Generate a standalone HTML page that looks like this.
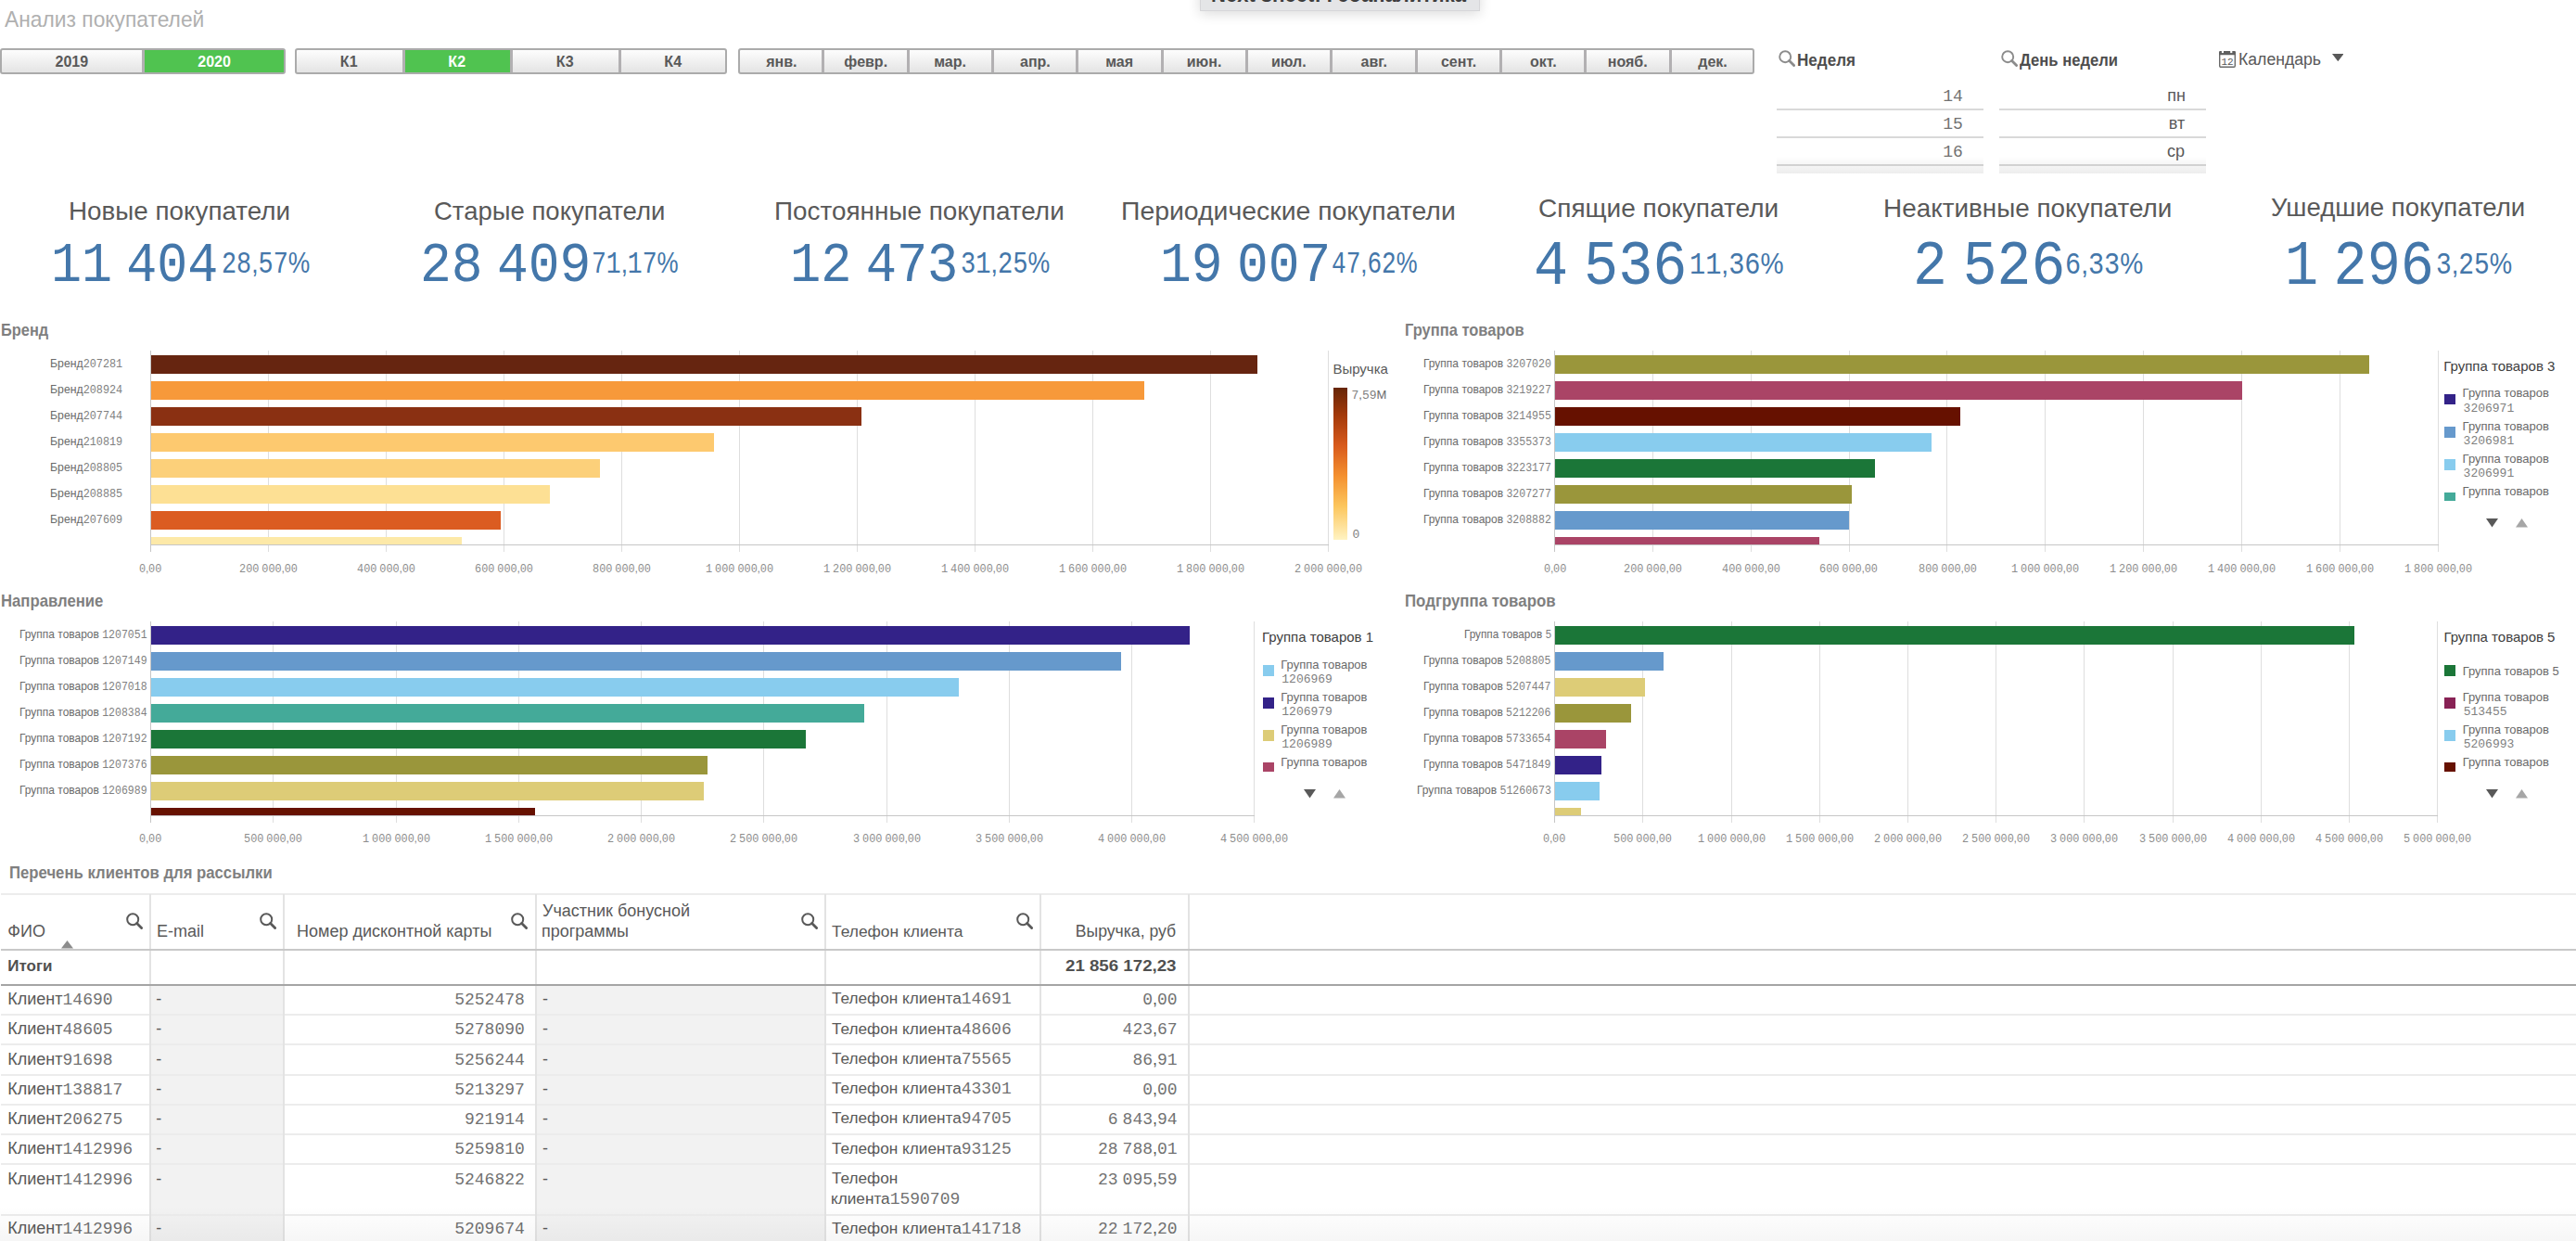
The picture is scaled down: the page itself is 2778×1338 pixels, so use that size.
<!DOCTYPE html>
<html><head><meta charset="utf-8"><title>Анализ покупателей</title>
<style>
html,body{margin:0;padding:0;background:#fff;}
body{width:2778px;height:1338px;position:relative;overflow:hidden;font-family:'Liberation Sans', sans-serif;}
.t{position:absolute;white-space:nowrap;line-height:1;transform-origin:0 0;}
.m{font-family:'Liberation Mono', monospace;}
</style></head><body>
<div style="position:absolute;left:0px;top:52px;width:307.5px;height:28px;box-sizing:border-box;border:2px solid #ababab;border-radius:3px;background:linear-gradient(#fdfdfd,#e4e4e4);overflow:hidden"></div>
<div style="position:absolute;left:155.75px;top:54.00px;width:149.75px;height:24.00px;background:#50c350;"></div>
<div style="position:absolute;left:152.75px;top:54.00px;width:3.00px;height:24.00px;background:#b2b0b2;"></div>
<div style="position:absolute;left:318px;top:52px;width:466px;height:28px;box-sizing:border-box;border:2px solid #ababab;border-radius:3px;background:linear-gradient(#fdfdfd,#e4e4e4);overflow:hidden"></div>
<div style="position:absolute;left:436.50px;top:54.00px;width:114.50px;height:24.00px;background:#50c350;"></div>
<div style="position:absolute;left:433.50px;top:54.00px;width:3.00px;height:24.00px;background:#b2b0b2;"></div>
<div style="position:absolute;left:550.00px;top:54.00px;width:3.00px;height:24.00px;background:#b2b0b2;"></div>
<div style="position:absolute;left:666.50px;top:54.00px;width:3.00px;height:24.00px;background:#b2b0b2;"></div>
<div style="position:absolute;left:796px;top:52px;width:1096px;height:28px;box-sizing:border-box;border:2px solid #ababab;border-radius:3px;background:linear-gradient(#fdfdfd,#e4e4e4);overflow:hidden"></div>
<div style="position:absolute;left:886.33px;top:54.00px;width:3.00px;height:24.00px;background:#b2b0b2;"></div>
<div style="position:absolute;left:977.67px;top:54.00px;width:3.00px;height:24.00px;background:#b2b0b2;"></div>
<div style="position:absolute;left:1069.00px;top:54.00px;width:3.00px;height:24.00px;background:#b2b0b2;"></div>
<div style="position:absolute;left:1160.33px;top:54.00px;width:3.00px;height:24.00px;background:#b2b0b2;"></div>
<div style="position:absolute;left:1251.67px;top:54.00px;width:3.00px;height:24.00px;background:#b2b0b2;"></div>
<div style="position:absolute;left:1343.00px;top:54.00px;width:3.00px;height:24.00px;background:#b2b0b2;"></div>
<div style="position:absolute;left:1434.33px;top:54.00px;width:3.00px;height:24.00px;background:#b2b0b2;"></div>
<div style="position:absolute;left:1525.67px;top:54.00px;width:3.00px;height:24.00px;background:#b2b0b2;"></div>
<div style="position:absolute;left:1617.00px;top:54.00px;width:3.00px;height:24.00px;background:#b2b0b2;"></div>
<div style="position:absolute;left:1708.33px;top:54.00px;width:3.00px;height:24.00px;background:#b2b0b2;"></div>
<div style="position:absolute;left:1799.67px;top:54.00px;width:3.00px;height:24.00px;background:#b2b0b2;"></div>
<svg style="position:absolute;left:1918px;top:54px" width="18" height="18" viewBox="0 0 18 18"><circle cx="7.2" cy="7.2" r="6" fill="none" stroke="#8c8c8c" stroke-width="1.9"/><line x1="11.6" y1="11.6" x2="16.6" y2="16.6" stroke="#8c8c8c" stroke-width="2.8" stroke-linecap="round"/></svg>
<svg style="position:absolute;left:2157.6px;top:54px" width="18" height="18" viewBox="0 0 18 18"><circle cx="7.2" cy="7.2" r="6" fill="none" stroke="#8c8c8c" stroke-width="1.9"/><line x1="11.6" y1="11.6" x2="16.6" y2="16.6" stroke="#8c8c8c" stroke-width="2.8" stroke-linecap="round"/></svg>
<div style="position:absolute;left:1916.00px;top:116.60px;width:223.00px;height:2.00px;background:#d9d9d9;"></div>
<div style="position:absolute;left:1916.00px;top:146.60px;width:223.00px;height:2.00px;background:#d9d9d9;"></div>
<div style="position:absolute;left:1916.00px;top:176.60px;width:223.00px;height:2.00px;background:#d9d9d9;"></div>
<div style="position:absolute;left:2156.00px;top:116.60px;width:223.00px;height:2.00px;background:#d9d9d9;"></div>
<div style="position:absolute;left:2156.00px;top:146.60px;width:223.00px;height:2.00px;background:#d9d9d9;"></div>
<div style="position:absolute;left:2156.00px;top:176.60px;width:223.00px;height:2.00px;background:#d9d9d9;"></div>
<svg style="position:absolute;left:2393px;top:55px" width="18" height="18" viewBox="0 0 18 18"><rect x="0.7" y="1.5" width="16.6" height="15.8" rx="1.2" fill="none" stroke="#6a6a6a" stroke-width="1.4"/><path d="M0 1.2 Q0 0 1.2 0 H16.8 Q18 0 18 1.2 V4.3 H0 Z" fill="#606060"/><rect x="2.9" y="0" width="2.1" height="2.1" fill="#fff"/><rect x="12.2" y="0" width="2.1" height="2.1" fill="#fff"/><text x="9" y="15.3" font-size="11" font-family="Liberation Mono" text-anchor="middle" fill="#555">12</text></svg>
<svg style="position:absolute;left:2514.6px;top:57.9px" width="12.6" height="8.2" viewBox="0 0 12.6 8.2"><polygon points="0,0 12.6,0 6.3,8.2" fill="#595959"/></svg>
<div style="position:absolute;left:1294px;top:-30px;width:302px;height:42px;background:#e4e5e7;box-sizing:border-box;border:1px solid #d6d6d9;box-shadow:0 3px 14px rgba(0,0,0,0.14);"></div>
<div style="position:absolute;left:162.00px;top:378.40px;width:1.00px;height:216.60px;background:#c6c6c6;"></div>
<div style="position:absolute;left:289.00px;top:378.40px;width:1.00px;height:216.60px;background:#dedede;"></div>
<div style="position:absolute;left:416.00px;top:378.40px;width:1.00px;height:216.60px;background:#dedede;"></div>
<div style="position:absolute;left:543.00px;top:378.40px;width:1.00px;height:216.60px;background:#dedede;"></div>
<div style="position:absolute;left:670.00px;top:378.40px;width:1.00px;height:216.60px;background:#dedede;"></div>
<div style="position:absolute;left:797.00px;top:378.40px;width:1.00px;height:216.60px;background:#dedede;"></div>
<div style="position:absolute;left:924.00px;top:378.40px;width:1.00px;height:216.60px;background:#dedede;"></div>
<div style="position:absolute;left:1051.00px;top:378.40px;width:1.00px;height:216.60px;background:#dedede;"></div>
<div style="position:absolute;left:1178.00px;top:378.40px;width:1.00px;height:216.60px;background:#dedede;"></div>
<div style="position:absolute;left:1305.00px;top:378.40px;width:1.00px;height:216.60px;background:#dedede;"></div>
<div style="position:absolute;left:1432.00px;top:378.40px;width:1.00px;height:216.60px;background:#dedede;"></div>
<div style="position:absolute;left:162.50px;top:587.20px;width:1270.50px;height:1.00px;background:#c6c6c6;"></div>
<div style="position:absolute;left:163.00px;top:383.00px;width:1193.00px;height:19.50px;background:#662510;"></div>
<div style="position:absolute;left:163.00px;top:411.00px;width:1071.00px;height:19.50px;background:#f7993a;"></div>
<div style="position:absolute;left:163.00px;top:439.00px;width:766.40px;height:19.50px;background:#8a3012;"></div>
<div style="position:absolute;left:163.00px;top:467.00px;width:606.60px;height:19.50px;background:#fdc96f;"></div>
<div style="position:absolute;left:163.00px;top:495.00px;width:483.90px;height:19.50px;background:#fcd07a;"></div>
<div style="position:absolute;left:163.00px;top:523.00px;width:429.70px;height:19.50px;background:#fde094;"></div>
<div style="position:absolute;left:163.00px;top:551.00px;width:377.20px;height:19.50px;background:#db5c21;"></div>
<div style="position:absolute;left:163.00px;top:579.00px;width:335.20px;height:8.00px;background:#fde9a8;"></div>
<div style="position:absolute;left:1438.00px;top:418.00px;width:15.00px;height:164.00px;background:linear-gradient(#662506 0%, #a3390a 18%, #d85a1c 38%, #f4902f 58%, #fcc65d 78%, #fff3c2 100%);"></div>
<div style="position:absolute;left:1676.20px;top:378.40px;width:1.00px;height:216.60px;background:#c6c6c6;"></div>
<div style="position:absolute;left:1782.02px;top:378.40px;width:1.00px;height:216.60px;background:#dedede;"></div>
<div style="position:absolute;left:1887.84px;top:378.40px;width:1.00px;height:216.60px;background:#dedede;"></div>
<div style="position:absolute;left:1993.66px;top:378.40px;width:1.00px;height:216.60px;background:#dedede;"></div>
<div style="position:absolute;left:2099.48px;top:378.40px;width:1.00px;height:216.60px;background:#dedede;"></div>
<div style="position:absolute;left:2205.30px;top:378.40px;width:1.00px;height:216.60px;background:#dedede;"></div>
<div style="position:absolute;left:2311.12px;top:378.40px;width:1.00px;height:216.60px;background:#dedede;"></div>
<div style="position:absolute;left:2416.94px;top:378.40px;width:1.00px;height:216.60px;background:#dedede;"></div>
<div style="position:absolute;left:2522.76px;top:378.40px;width:1.00px;height:216.60px;background:#dedede;"></div>
<div style="position:absolute;left:2628.58px;top:378.40px;width:1.00px;height:216.60px;background:#dedede;"></div>
<div style="position:absolute;left:1676.70px;top:587.20px;width:952.88px;height:1.00px;background:#c6c6c6;"></div>
<div style="position:absolute;left:1677.20px;top:383.00px;width:878.10px;height:19.50px;background:#9a963b;"></div>
<div style="position:absolute;left:1677.20px;top:411.00px;width:740.70px;height:19.50px;background:#aa4466;"></div>
<div style="position:absolute;left:1677.20px;top:439.00px;width:437.00px;height:19.50px;background:#661100;"></div>
<div style="position:absolute;left:1677.20px;top:467.00px;width:405.80px;height:19.50px;background:#88ccee;"></div>
<div style="position:absolute;left:1677.20px;top:495.00px;width:344.80px;height:19.50px;background:#1b7638;"></div>
<div style="position:absolute;left:1677.20px;top:523.00px;width:319.80px;height:19.50px;background:#9a963b;"></div>
<div style="position:absolute;left:1677.20px;top:551.00px;width:316.80px;height:19.50px;background:#6699cc;"></div>
<div style="position:absolute;left:1677.20px;top:579.00px;width:284.80px;height:8.00px;background:#aa4466;"></div>
<div style="position:absolute;left:162.10px;top:670.20px;width:1.00px;height:216.80px;background:#c6c6c6;"></div>
<div style="position:absolute;left:294.35px;top:670.20px;width:1.00px;height:216.80px;background:#dedede;"></div>
<div style="position:absolute;left:426.60px;top:670.20px;width:1.00px;height:216.80px;background:#dedede;"></div>
<div style="position:absolute;left:558.85px;top:670.20px;width:1.00px;height:216.80px;background:#dedede;"></div>
<div style="position:absolute;left:691.10px;top:670.20px;width:1.00px;height:216.80px;background:#dedede;"></div>
<div style="position:absolute;left:823.35px;top:670.20px;width:1.00px;height:216.80px;background:#dedede;"></div>
<div style="position:absolute;left:955.60px;top:670.20px;width:1.00px;height:216.80px;background:#dedede;"></div>
<div style="position:absolute;left:1087.85px;top:670.20px;width:1.00px;height:216.80px;background:#dedede;"></div>
<div style="position:absolute;left:1220.10px;top:670.20px;width:1.00px;height:216.80px;background:#dedede;"></div>
<div style="position:absolute;left:1352.35px;top:670.20px;width:1.00px;height:216.80px;background:#dedede;"></div>
<div style="position:absolute;left:162.60px;top:879.00px;width:1190.75px;height:1.00px;background:#c6c6c6;"></div>
<div style="position:absolute;left:163.10px;top:675.00px;width:1120.30px;height:19.50px;background:#332288;"></div>
<div style="position:absolute;left:163.10px;top:703.00px;width:1046.00px;height:19.50px;background:#6699cc;"></div>
<div style="position:absolute;left:163.10px;top:731.00px;width:870.80px;height:19.50px;background:#88ccee;"></div>
<div style="position:absolute;left:163.10px;top:759.00px;width:769.40px;height:19.50px;background:#44aa99;"></div>
<div style="position:absolute;left:163.10px;top:787.00px;width:706.10px;height:19.50px;background:#1b7638;"></div>
<div style="position:absolute;left:163.10px;top:815.00px;width:599.90px;height:19.50px;background:#9a963b;"></div>
<div style="position:absolute;left:163.10px;top:843.00px;width:595.50px;height:19.50px;background:#ddcc77;"></div>
<div style="position:absolute;left:163.10px;top:871.00px;width:413.50px;height:8.00px;background:#661100;"></div>
<div style="position:absolute;left:1676.10px;top:670.20px;width:1.00px;height:216.80px;background:#c6c6c6;"></div>
<div style="position:absolute;left:1771.30px;top:670.20px;width:1.00px;height:216.80px;background:#dedede;"></div>
<div style="position:absolute;left:1866.50px;top:670.20px;width:1.00px;height:216.80px;background:#dedede;"></div>
<div style="position:absolute;left:1961.70px;top:670.20px;width:1.00px;height:216.80px;background:#dedede;"></div>
<div style="position:absolute;left:2056.90px;top:670.20px;width:1.00px;height:216.80px;background:#dedede;"></div>
<div style="position:absolute;left:2152.10px;top:670.20px;width:1.00px;height:216.80px;background:#dedede;"></div>
<div style="position:absolute;left:2247.30px;top:670.20px;width:1.00px;height:216.80px;background:#dedede;"></div>
<div style="position:absolute;left:2342.50px;top:670.20px;width:1.00px;height:216.80px;background:#dedede;"></div>
<div style="position:absolute;left:2437.70px;top:670.20px;width:1.00px;height:216.80px;background:#dedede;"></div>
<div style="position:absolute;left:2532.90px;top:670.20px;width:1.00px;height:216.80px;background:#dedede;"></div>
<div style="position:absolute;left:2628.10px;top:670.20px;width:1.00px;height:216.80px;background:#dedede;"></div>
<div style="position:absolute;left:1676.60px;top:879.00px;width:952.50px;height:1.00px;background:#c6c6c6;"></div>
<div style="position:absolute;left:1677.10px;top:675.00px;width:861.90px;height:19.50px;background:#1b7638;"></div>
<div style="position:absolute;left:1677.10px;top:703.00px;width:116.90px;height:19.50px;background:#6699cc;"></div>
<div style="position:absolute;left:1677.10px;top:731.00px;width:97.40px;height:19.50px;background:#ddcc77;"></div>
<div style="position:absolute;left:1677.10px;top:759.00px;width:81.50px;height:19.50px;background:#9a963b;"></div>
<div style="position:absolute;left:1677.10px;top:787.00px;width:54.90px;height:19.50px;background:#aa4466;"></div>
<div style="position:absolute;left:1677.10px;top:815.00px;width:49.50px;height:19.50px;background:#332288;"></div>
<div style="position:absolute;left:1677.10px;top:843.00px;width:47.90px;height:19.50px;background:#88ccee;"></div>
<div style="position:absolute;left:1677.10px;top:871.00px;width:27.90px;height:8.00px;background:#ddcc77;"></div>
<div style="position:absolute;left:2636.30px;top:424.60px;width:11.50px;height:11.50px;background:#332288;"></div>
<div style="position:absolute;left:2636.30px;top:460.00px;width:11.50px;height:11.50px;background:#6699cc;"></div>
<div style="position:absolute;left:2636.30px;top:495.30px;width:11.50px;height:11.50px;background:#88ccee;"></div>
<div style="position:absolute;left:2636.30px;top:530.50px;width:11.50px;height:9.50px;background:#44aa99;"></div>
<svg style="position:absolute;left:2680.5px;top:559px" width="13" height="9.5" viewBox="0 0 13 9.5"><polygon points="0,0 13,0 6.5,9.5" fill="#595959"/></svg>
<svg style="position:absolute;left:2712.6000000000004px;top:559px" width="13" height="9.5" viewBox="0 0 13 9.5"><polygon points="0,9.5 13,9.5 6.5,0" fill="#a6a6a6"/></svg>
<div style="position:absolute;left:1362.00px;top:717.00px;width:11.50px;height:11.50px;background:#88ccee;"></div>
<div style="position:absolute;left:1362.00px;top:752.00px;width:11.50px;height:11.50px;background:#332288;"></div>
<div style="position:absolute;left:1362.00px;top:787.00px;width:11.50px;height:11.50px;background:#ddcc77;"></div>
<div style="position:absolute;left:1362.00px;top:822.00px;width:11.50px;height:9.50px;background:#aa4466;"></div>
<svg style="position:absolute;left:1406.2px;top:851px" width="13" height="9.5" viewBox="0 0 13 9.5"><polygon points="0,0 13,0 6.5,9.5" fill="#595959"/></svg>
<svg style="position:absolute;left:1438.3px;top:851px" width="13" height="9.5" viewBox="0 0 13 9.5"><polygon points="0,9.5 13,9.5 6.5,0" fill="#a6a6a6"/></svg>
<div style="position:absolute;left:2636.40px;top:717.00px;width:11.50px;height:11.50px;background:#1b7638;"></div>
<div style="position:absolute;left:2636.40px;top:752.00px;width:11.50px;height:11.50px;background:#882255;"></div>
<div style="position:absolute;left:2636.40px;top:787.00px;width:11.50px;height:11.50px;background:#88ccee;"></div>
<div style="position:absolute;left:2636.40px;top:822.00px;width:11.50px;height:9.50px;background:#661100;"></div>
<svg style="position:absolute;left:2680.6px;top:851px" width="13" height="9.5" viewBox="0 0 13 9.5"><polygon points="0,0 13,0 6.5,9.5" fill="#595959"/></svg>
<svg style="position:absolute;left:2712.7000000000003px;top:851px" width="13" height="9.5" viewBox="0 0 13 9.5"><polygon points="0,9.5 13,9.5 6.5,0" fill="#a6a6a6"/></svg>
<div style="position:absolute;left:163.00px;top:1062.50px;width:142.00px;height:275.50px;background:#f2f2f2;"></div>
<div style="position:absolute;left:578.70px;top:1062.50px;width:310.30px;height:275.50px;background:#f2f2f2;"></div>
<div style="position:absolute;left:1.00px;top:963.20px;width:2777.00px;height:2.00px;background:#ececec;"></div>
<div style="position:absolute;left:1.00px;top:1092.80px;width:2777.00px;height:2.00px;background:#ececec;"></div>
<div style="position:absolute;left:1.00px;top:1125.40px;width:2777.00px;height:2.00px;background:#ececec;"></div>
<div style="position:absolute;left:1.00px;top:1158.00px;width:2777.00px;height:2.00px;background:#ececec;"></div>
<div style="position:absolute;left:1.00px;top:1190.00px;width:2777.00px;height:2.00px;background:#ececec;"></div>
<div style="position:absolute;left:1.00px;top:1222.00px;width:2777.00px;height:2.00px;background:#ececec;"></div>
<div style="position:absolute;left:1.00px;top:1254.20px;width:2777.00px;height:2.00px;background:#ececec;"></div>
<div style="position:absolute;left:1.00px;top:1309.00px;width:2777.00px;height:2.00px;background:#ececec;"></div>
<div style="position:absolute;left:161.00px;top:964.20px;width:2.00px;height:373.80px;background:#e3e3e3;"></div>
<div style="position:absolute;left:304.80px;top:964.20px;width:2.00px;height:373.80px;background:#e3e3e3;"></div>
<div style="position:absolute;left:576.70px;top:964.20px;width:2.00px;height:373.80px;background:#e3e3e3;"></div>
<div style="position:absolute;left:888.80px;top:964.20px;width:2.00px;height:373.80px;background:#e3e3e3;"></div>
<div style="position:absolute;left:1120.60px;top:964.20px;width:2.00px;height:373.80px;background:#e3e3e3;"></div>
<div style="position:absolute;left:1280.60px;top:964.20px;width:2.00px;height:373.80px;background:#e3e3e3;"></div>
<div style="position:absolute;left:1.00px;top:1023.00px;width:2777.00px;height:2.00px;background:#c8c8c8;"></div>
<div style="position:absolute;left:1.00px;top:1061.00px;width:2777.00px;height:2.00px;background:#a5a5a5;"></div>
<svg style="position:absolute;left:135.8px;top:984px" width="18" height="18" viewBox="0 0 18 18"><circle cx="7.2" cy="7.2" r="6" fill="none" stroke="#595959" stroke-width="2.0"/><line x1="11.6" y1="11.6" x2="16.6" y2="16.6" stroke="#595959" stroke-width="2.8" stroke-linecap="round"/></svg>
<svg style="position:absolute;left:279.5px;top:984px" width="18" height="18" viewBox="0 0 18 18"><circle cx="7.2" cy="7.2" r="6" fill="none" stroke="#595959" stroke-width="2.0"/><line x1="11.6" y1="11.6" x2="16.6" y2="16.6" stroke="#595959" stroke-width="2.8" stroke-linecap="round"/></svg>
<svg style="position:absolute;left:550.5px;top:984px" width="18" height="18" viewBox="0 0 18 18"><circle cx="7.2" cy="7.2" r="6" fill="none" stroke="#595959" stroke-width="2.0"/><line x1="11.6" y1="11.6" x2="16.6" y2="16.6" stroke="#595959" stroke-width="2.8" stroke-linecap="round"/></svg>
<svg style="position:absolute;left:863.6px;top:984px" width="18" height="18" viewBox="0 0 18 18"><circle cx="7.2" cy="7.2" r="6" fill="none" stroke="#595959" stroke-width="2.0"/><line x1="11.6" y1="11.6" x2="16.6" y2="16.6" stroke="#595959" stroke-width="2.8" stroke-linecap="round"/></svg>
<svg style="position:absolute;left:1095.8px;top:984px" width="18" height="18" viewBox="0 0 18 18"><circle cx="7.2" cy="7.2" r="6" fill="none" stroke="#595959" stroke-width="2.0"/><line x1="11.6" y1="11.6" x2="16.6" y2="16.6" stroke="#595959" stroke-width="2.8" stroke-linecap="round"/></svg>
<svg style="position:absolute;left:66.4px;top:1014.3px" width="13" height="8.5" viewBox="0 0 13 8.5"><polygon points="0,8.5 13,8.5 6.5,0" fill="#8c8c8c"/></svg>
<div class="t" style="left:5.40px;top:8.80px;font-size:24px;color:#b0b0b0;transform:scaleX(0.9501);">Анализ покупателей</div>
<div class="t" style="left:59.53px;top:58.60px;font-size:16px;color:#595959;font-weight:bold;">2019</div>
<div class="t" style="left:213.28px;top:58.60px;font-size:16px;color:#ffffff;font-weight:bold;">2020</div>
<div class="t" style="left:366.87px;top:58.60px;font-size:16px;color:#595959;font-weight:bold;">К1</div>
<div class="t" style="left:483.37px;top:58.60px;font-size:16px;color:#ffffff;font-weight:bold;">К2</div>
<div class="t" style="left:599.87px;top:58.60px;font-size:16px;color:#595959;font-weight:bold;">К3</div>
<div class="t" style="left:716.37px;top:58.60px;font-size:16px;color:#595959;font-weight:bold;">К4</div>
<div class="t" style="left:826.25px;top:58.60px;font-size:16px;color:#595959;font-weight:bold;">янв.</div>
<div class="t" style="left:910.35px;top:58.60px;font-size:16px;color:#595959;font-weight:bold;">февр.</div>
<div class="t" style="left:1007.18px;top:58.60px;font-size:16px;color:#595959;font-weight:bold;">мар.</div>
<div class="t" style="left:1100.00px;top:58.60px;font-size:16px;color:#595959;font-weight:bold;">апр.</div>
<div class="t" style="left:1192.24px;top:58.60px;font-size:16px;color:#595959;font-weight:bold;">мая</div>
<div class="t" style="left:1279.75px;top:58.60px;font-size:16px;color:#595959;font-weight:bold;">июн.</div>
<div class="t" style="left:1371.03px;top:58.60px;font-size:16px;color:#595959;font-weight:bold;">июл.</div>
<div class="t" style="left:1467.60px;top:58.60px;font-size:16px;color:#595959;font-weight:bold;">авг.</div>
<div class="t" style="left:1553.89px;top:58.60px;font-size:16px;color:#595959;font-weight:bold;">сент.</div>
<div class="t" style="left:1650.06px;top:58.60px;font-size:16px;color:#595959;font-weight:bold;">окт.</div>
<div class="t" style="left:1733.78px;top:58.60px;font-size:16px;color:#595959;font-weight:bold;">нояб.</div>
<div class="t" style="left:1831.30px;top:58.60px;font-size:16px;color:#595959;font-weight:bold;">дек.</div>
<div class="t" style="left:1937.55px;top:55.70px;font-size:18px;color:#4d4d4d;font-weight:bold;transform:scaleX(0.9479);">Неделя</div>
<div class="t" style="left:2178.00px;top:55.70px;font-size:18px;color:#4d4d4d;font-weight:bold;transform:scaleX(0.9231);">День недели</div>
<div class="t" style="left:2095.20px;top:93.70px;font-size:18px;color:#595959;"><span class="m" style="font-size:18px;opacity:.85">14</span></div>
<div class="t" style="left:2095.20px;top:123.70px;font-size:18px;color:#595959;"><span class="m" style="font-size:18px;opacity:.85">15</span></div>
<div class="t" style="left:2095.20px;top:153.70px;font-size:18px;color:#595959;"><span class="m" style="font-size:18px;opacity:.85">16</span></div>
<div class="t" style="left:2337.25px;top:93.70px;font-size:18px;color:#595959;">пн</div>
<div class="t" style="left:2338.83px;top:123.70px;font-size:18px;color:#595959;">вт</div>
<div class="t" style="left:2337.00px;top:153.70px;font-size:18px;color:#595959;">ср</div>
<div class="t" style="left:2414.02px;top:54.70px;font-size:18px;color:#595959;transform:scaleX(0.9802);">Календарь</div>
<div class="t" style="left:1306.08px;top:-18.00px;font-size:24px;color:#3d3d3d;font-weight:bold;transform:scaleX(0.9179);">Next sheet: Геоаналитика</div>
<div class="t" style="left:74.01px;top:214.20px;font-size:28px;color:#595959;transform:scaleX(0.9934);">Новые покупатели</div>
<div class="t" style="left:55.44px;top:252.24px;font-size:60.9px;color:#4477aa;transform:scaleX(0.8911);"><span class="m" style="font-size:61.8px">11</span> <span class="m" style="font-size:61.8px">404</span></div>
<div class="t" style="left:239.05px;top:266.80px;font-size:32px;color:#4477aa;transform:scaleX(0.8264);"><span class="m" style="font-size:32.5px">28</span>,<span class="m" style="font-size:32.5px">57</span>%</div>
<div class="t" style="left:468.02px;top:214.20px;font-size:28px;color:#595959;transform:scaleX(0.9823);">Старые покупатели</div>
<div class="t" style="left:452.86px;top:252.24px;font-size:60.9px;color:#4477aa;transform:scaleX(0.9112);"><span class="m" style="font-size:61.8px">28</span> <span class="m" style="font-size:61.8px">409</span></div>
<div class="t" style="left:638.18px;top:266.80px;font-size:32px;color:#4477aa;transform:scaleX(0.8113);"><span class="m" style="font-size:32.5px">71</span>,<span class="m" style="font-size:32.5px">17</span>%</div>
<div class="t" style="left:834.61px;top:214.20px;font-size:28px;color:#595959;transform:scaleX(0.9963);">Постоянные покупатели</div>
<div class="t" style="left:852.41px;top:252.24px;font-size:60.9px;color:#4477aa;transform:scaleX(0.8963);"><span class="m" style="font-size:61.8px">12</span> <span class="m" style="font-size:61.8px">473</span></div>
<div class="t" style="left:1035.93px;top:266.80px;font-size:32px;color:#4477aa;transform:scaleX(0.8335);"><span class="m" style="font-size:32.5px">31</span>,<span class="m" style="font-size:32.5px">25</span>%</div>
<div class="t" style="left:1209.47px;top:214.20px;font-size:28px;color:#595959;transform:scaleX(1.0140);">Периодические покупатели</div>
<div class="t" style="left:1251.36px;top:252.24px;font-size:60.9px;color:#4477aa;transform:scaleX(0.9112);"><span class="m" style="font-size:61.8px">19</span> <span class="m" style="font-size:61.8px">007</span></div>
<div class="t" style="left:1435.80px;top:266.80px;font-size:32px;color:#4477aa;transform:scaleX(0.8024);"><span class="m" style="font-size:32.5px">47</span>,<span class="m" style="font-size:32.5px">62</span>%</div>
<div class="t" style="left:1659.00px;top:211.20px;font-size:28px;color:#595959;">Спящие покупатели</div>
<div class="t" style="left:1654.09px;top:249.12px;font-size:67.5px;color:#4477aa;transform:scaleX(0.9030);"><span class="m" style="font-size:68.5px">4</span> <span class="m" style="font-size:68.5px">536</span></div>
<div class="t" style="left:1821.84px;top:268.40px;font-size:32px;color:#4477aa;transform:scaleX(0.8804);"><span class="m" style="font-size:32.5px">11</span>,<span class="m" style="font-size:32.5px">36</span>%</div>
<div class="t" style="left:2031.01px;top:211.20px;font-size:28px;color:#595959;transform:scaleX(0.9954);">Неактивные покупатели</div>
<div class="t" style="left:2063.41px;top:249.12px;font-size:67.5px;color:#4477aa;transform:scaleX(0.8968);"><span class="m" style="font-size:68.5px">2</span> <span class="m" style="font-size:68.5px">526</span></div>
<div class="t" style="left:2227.24px;top:268.40px;font-size:32px;color:#4477aa;transform:scaleX(0.8779);"><span class="m" style="font-size:32.5px">6</span>,<span class="m" style="font-size:32.5px">33</span>%</div>
<div class="t" style="left:2449.40px;top:210.40px;font-size:28px;color:#595959;transform:scaleX(0.9854);">Ушедшие покупатели</div>
<div class="t" style="left:2464.47px;top:248.88px;font-size:67.2px;color:#4477aa;transform:scaleX(0.8829);"><span class="m" style="font-size:68.2px">1</span> <span class="m" style="font-size:68.2px">296</span></div>
<div class="t" style="left:2627.29px;top:267.60px;font-size:32px;color:#4477aa;transform:scaleX(0.8565);"><span class="m" style="font-size:32.5px">3</span>,<span class="m" style="font-size:32.5px">25</span>%</div>
<div class="t" style="left:1.14px;top:346.45px;font-size:19px;color:#7f7f7f;font-weight:bold;transform:scaleX(0.8627);">Бренд</div>
<div class="t" style="left:150.38px;top:606.80px;font-size:12px;color:#7a7a7a;transform:scaleX(0.8800);"><span class="m" style="font-size:13.5px;opacity:.85">0</span>,<span class="m" style="font-size:13.5px;opacity:.85">00</span></div>
<div class="t" style="left:258.09px;top:606.80px;font-size:12px;color:#7a7a7a;transform:scaleX(0.8800);"><span class="m" style="font-size:13.5px;opacity:.85">200</span> <span class="m" style="font-size:13.5px;opacity:.85">000</span>,<span class="m" style="font-size:13.5px;opacity:.85">00</span></div>
<div class="t" style="left:385.09px;top:606.80px;font-size:12px;color:#7a7a7a;transform:scaleX(0.8800);"><span class="m" style="font-size:13.5px;opacity:.85">400</span> <span class="m" style="font-size:13.5px;opacity:.85">000</span>,<span class="m" style="font-size:13.5px;opacity:.85">00</span></div>
<div class="t" style="left:511.65px;top:606.80px;font-size:12px;color:#7a7a7a;transform:scaleX(0.8800);"><span class="m" style="font-size:13.5px;opacity:.85">600</span> <span class="m" style="font-size:13.5px;opacity:.85">000</span>,<span class="m" style="font-size:13.5px;opacity:.85">00</span></div>
<div class="t" style="left:639.09px;top:606.80px;font-size:12px;color:#7a7a7a;transform:scaleX(0.8800);"><span class="m" style="font-size:13.5px;opacity:.85">800</span> <span class="m" style="font-size:13.5px;opacity:.85">000</span>,<span class="m" style="font-size:13.5px;opacity:.85">00</span></div>
<div class="t" style="left:761.06px;top:606.80px;font-size:12px;color:#7a7a7a;transform:scaleX(0.8800);"><span class="m" style="font-size:13.5px;opacity:.85">1</span> <span class="m" style="font-size:13.5px;opacity:.85">000</span> <span class="m" style="font-size:13.5px;opacity:.85">000</span>,<span class="m" style="font-size:13.5px;opacity:.85">00</span></div>
<div class="t" style="left:888.06px;top:606.80px;font-size:12px;color:#7a7a7a;transform:scaleX(0.8800);"><span class="m" style="font-size:13.5px;opacity:.85">1</span> <span class="m" style="font-size:13.5px;opacity:.85">200</span> <span class="m" style="font-size:13.5px;opacity:.85">000</span>,<span class="m" style="font-size:13.5px;opacity:.85">00</span></div>
<div class="t" style="left:1015.06px;top:606.80px;font-size:12px;color:#7a7a7a;transform:scaleX(0.8800);"><span class="m" style="font-size:13.5px;opacity:.85">1</span> <span class="m" style="font-size:13.5px;opacity:.85">400</span> <span class="m" style="font-size:13.5px;opacity:.85">000</span>,<span class="m" style="font-size:13.5px;opacity:.85">00</span></div>
<div class="t" style="left:1142.06px;top:606.80px;font-size:12px;color:#7a7a7a;transform:scaleX(0.8800);"><span class="m" style="font-size:13.5px;opacity:.85">1</span> <span class="m" style="font-size:13.5px;opacity:.85">600</span> <span class="m" style="font-size:13.5px;opacity:.85">000</span>,<span class="m" style="font-size:13.5px;opacity:.85">00</span></div>
<div class="t" style="left:1269.06px;top:606.80px;font-size:12px;color:#7a7a7a;transform:scaleX(0.8800);"><span class="m" style="font-size:13.5px;opacity:.85">1</span> <span class="m" style="font-size:13.5px;opacity:.85">800</span> <span class="m" style="font-size:13.5px;opacity:.85">000</span>,<span class="m" style="font-size:13.5px;opacity:.85">00</span></div>
<div class="t" style="left:1396.06px;top:606.80px;font-size:12px;color:#7a7a7a;transform:scaleX(0.8800);"><span class="m" style="font-size:13.5px;opacity:.85">2</span> <span class="m" style="font-size:13.5px;opacity:.85">000</span> <span class="m" style="font-size:13.5px;opacity:.85">000</span>,<span class="m" style="font-size:13.5px;opacity:.85">00</span></div>
<div class="t" style="left:54.36px;top:384.95px;font-size:13px;color:#6a6a6a;transform:scaleX(0.9439);">Бренд<span class="m" style="font-size:12.5px;opacity:.85">207281</span></div>
<div class="t" style="left:54.36px;top:412.95px;font-size:13px;color:#6a6a6a;transform:scaleX(0.9439);">Бренд<span class="m" style="font-size:12.5px;opacity:.85">208924</span></div>
<div class="t" style="left:54.36px;top:440.95px;font-size:13px;color:#6a6a6a;transform:scaleX(0.9439);">Бренд<span class="m" style="font-size:12.5px;opacity:.85">207744</span></div>
<div class="t" style="left:54.36px;top:468.95px;font-size:13px;color:#6a6a6a;transform:scaleX(0.9439);">Бренд<span class="m" style="font-size:12.5px;opacity:.85">210819</span></div>
<div class="t" style="left:54.36px;top:496.95px;font-size:13px;color:#6a6a6a;transform:scaleX(0.9439);">Бренд<span class="m" style="font-size:12.5px;opacity:.85">208805</span></div>
<div class="t" style="left:54.36px;top:524.95px;font-size:13px;color:#6a6a6a;transform:scaleX(0.9439);">Бренд<span class="m" style="font-size:12.5px;opacity:.85">208885</span></div>
<div class="t" style="left:54.36px;top:552.95px;font-size:13px;color:#6a6a6a;transform:scaleX(0.9439);">Бренд<span class="m" style="font-size:12.5px;opacity:.85">207609</span></div>
<div class="t" style="left:1437.40px;top:390.45px;font-size:15px;color:#595959;">Выручка</div>
<div class="t" style="left:1457.50px;top:418.75px;font-size:13px;color:#6a6a6a;"><span class="m" style="font-size:13px;opacity:.85">7</span>,<span class="m" style="font-size:13px;opacity:.85">59</span>M</div>
<div class="t" style="left:1458.50px;top:568.55px;font-size:13px;color:#6a6a6a;"><span class="m" style="font-size:13px;opacity:.85">0</span></div>
<div class="t" style="left:1514.93px;top:346.45px;font-size:19px;color:#7f7f7f;font-weight:bold;transform:scaleX(0.8674);">Группа товаров</div>
<div class="t" style="left:1664.58px;top:606.80px;font-size:12px;color:#7a7a7a;transform:scaleX(0.8800);"><span class="m" style="font-size:13.5px;opacity:.85">0</span>,<span class="m" style="font-size:13.5px;opacity:.85">00</span></div>
<div class="t" style="left:1751.11px;top:606.80px;font-size:12px;color:#7a7a7a;transform:scaleX(0.8800);"><span class="m" style="font-size:13.5px;opacity:.85">200</span> <span class="m" style="font-size:13.5px;opacity:.85">000</span>,<span class="m" style="font-size:13.5px;opacity:.85">00</span></div>
<div class="t" style="left:1856.93px;top:606.80px;font-size:12px;color:#7a7a7a;transform:scaleX(0.8800);"><span class="m" style="font-size:13.5px;opacity:.85">400</span> <span class="m" style="font-size:13.5px;opacity:.85">000</span>,<span class="m" style="font-size:13.5px;opacity:.85">00</span></div>
<div class="t" style="left:1962.31px;top:606.80px;font-size:12px;color:#7a7a7a;transform:scaleX(0.8800);"><span class="m" style="font-size:13.5px;opacity:.85">600</span> <span class="m" style="font-size:13.5px;opacity:.85">000</span>,<span class="m" style="font-size:13.5px;opacity:.85">00</span></div>
<div class="t" style="left:2068.57px;top:606.80px;font-size:12px;color:#7a7a7a;transform:scaleX(0.8800);"><span class="m" style="font-size:13.5px;opacity:.85">800</span> <span class="m" style="font-size:13.5px;opacity:.85">000</span>,<span class="m" style="font-size:13.5px;opacity:.85">00</span></div>
<div class="t" style="left:2169.36px;top:606.80px;font-size:12px;color:#7a7a7a;transform:scaleX(0.8800);"><span class="m" style="font-size:13.5px;opacity:.85">1</span> <span class="m" style="font-size:13.5px;opacity:.85">000</span> <span class="m" style="font-size:13.5px;opacity:.85">000</span>,<span class="m" style="font-size:13.5px;opacity:.85">00</span></div>
<div class="t" style="left:2275.18px;top:606.80px;font-size:12px;color:#7a7a7a;transform:scaleX(0.8800);"><span class="m" style="font-size:13.5px;opacity:.85">1</span> <span class="m" style="font-size:13.5px;opacity:.85">200</span> <span class="m" style="font-size:13.5px;opacity:.85">000</span>,<span class="m" style="font-size:13.5px;opacity:.85">00</span></div>
<div class="t" style="left:2381.00px;top:606.80px;font-size:12px;color:#7a7a7a;transform:scaleX(0.8800);"><span class="m" style="font-size:13.5px;opacity:.85">1</span> <span class="m" style="font-size:13.5px;opacity:.85">400</span> <span class="m" style="font-size:13.5px;opacity:.85">000</span>,<span class="m" style="font-size:13.5px;opacity:.85">00</span></div>
<div class="t" style="left:2486.82px;top:606.80px;font-size:12px;color:#7a7a7a;transform:scaleX(0.8800);"><span class="m" style="font-size:13.5px;opacity:.85">1</span> <span class="m" style="font-size:13.5px;opacity:.85">600</span> <span class="m" style="font-size:13.5px;opacity:.85">000</span>,<span class="m" style="font-size:13.5px;opacity:.85">00</span></div>
<div class="t" style="left:2592.64px;top:606.80px;font-size:12px;color:#7a7a7a;transform:scaleX(0.8800);"><span class="m" style="font-size:13.5px;opacity:.85">1</span> <span class="m" style="font-size:13.5px;opacity:.85">800</span> <span class="m" style="font-size:13.5px;opacity:.85">000</span>,<span class="m" style="font-size:13.5px;opacity:.85">00</span></div>
<div class="t" style="left:1535.18px;top:384.95px;font-size:13px;color:#6a6a6a;transform:scaleX(0.9234);">Группа товаров <span class="m" style="font-size:12.5px;opacity:.85">3207020</span></div>
<div class="t" style="left:1535.18px;top:412.95px;font-size:13px;color:#6a6a6a;transform:scaleX(0.9234);">Группа товаров <span class="m" style="font-size:12.5px;opacity:.85">3219227</span></div>
<div class="t" style="left:1535.18px;top:440.95px;font-size:13px;color:#6a6a6a;transform:scaleX(0.9234);">Группа товаров <span class="m" style="font-size:12.5px;opacity:.85">3214955</span></div>
<div class="t" style="left:1535.18px;top:468.95px;font-size:13px;color:#6a6a6a;transform:scaleX(0.9234);">Группа товаров <span class="m" style="font-size:12.5px;opacity:.85">3355373</span></div>
<div class="t" style="left:1535.18px;top:496.95px;font-size:13px;color:#6a6a6a;transform:scaleX(0.9234);">Группа товаров <span class="m" style="font-size:12.5px;opacity:.85">3223177</span></div>
<div class="t" style="left:1535.18px;top:524.95px;font-size:13px;color:#6a6a6a;transform:scaleX(0.9234);">Группа товаров <span class="m" style="font-size:12.5px;opacity:.85">3207277</span></div>
<div class="t" style="left:1535.18px;top:552.95px;font-size:13px;color:#6a6a6a;transform:scaleX(0.9234);">Группа товаров <span class="m" style="font-size:12.5px;opacity:.85">3208882</span></div>
<div class="t" style="left:1.12px;top:638.35px;font-size:19px;color:#7f7f7f;font-weight:bold;transform:scaleX(0.8797);">Направление</div>
<div class="t" style="left:150.48px;top:898.40px;font-size:12px;color:#7a7a7a;transform:scaleX(0.8800);"><span class="m" style="font-size:13.5px;opacity:.85">0</span>,<span class="m" style="font-size:13.5px;opacity:.85">00</span></div>
<div class="t" style="left:263.44px;top:898.40px;font-size:12px;color:#7a7a7a;transform:scaleX(0.8800);"><span class="m" style="font-size:13.5px;opacity:.85">500</span> <span class="m" style="font-size:13.5px;opacity:.85">000</span>,<span class="m" style="font-size:13.5px;opacity:.85">00</span></div>
<div class="t" style="left:390.66px;top:898.40px;font-size:12px;color:#7a7a7a;transform:scaleX(0.8800);"><span class="m" style="font-size:13.5px;opacity:.85">1</span> <span class="m" style="font-size:13.5px;opacity:.85">000</span> <span class="m" style="font-size:13.5px;opacity:.85">000</span>,<span class="m" style="font-size:13.5px;opacity:.85">00</span></div>
<div class="t" style="left:522.91px;top:898.40px;font-size:12px;color:#7a7a7a;transform:scaleX(0.8800);"><span class="m" style="font-size:13.5px;opacity:.85">1</span> <span class="m" style="font-size:13.5px;opacity:.85">500</span> <span class="m" style="font-size:13.5px;opacity:.85">000</span>,<span class="m" style="font-size:13.5px;opacity:.85">00</span></div>
<div class="t" style="left:655.16px;top:898.40px;font-size:12px;color:#7a7a7a;transform:scaleX(0.8800);"><span class="m" style="font-size:13.5px;opacity:.85">2</span> <span class="m" style="font-size:13.5px;opacity:.85">000</span> <span class="m" style="font-size:13.5px;opacity:.85">000</span>,<span class="m" style="font-size:13.5px;opacity:.85">00</span></div>
<div class="t" style="left:787.41px;top:898.40px;font-size:12px;color:#7a7a7a;transform:scaleX(0.8800);"><span class="m" style="font-size:13.5px;opacity:.85">2</span> <span class="m" style="font-size:13.5px;opacity:.85">500</span> <span class="m" style="font-size:13.5px;opacity:.85">000</span>,<span class="m" style="font-size:13.5px;opacity:.85">00</span></div>
<div class="t" style="left:919.66px;top:898.40px;font-size:12px;color:#7a7a7a;transform:scaleX(0.8800);"><span class="m" style="font-size:13.5px;opacity:.85">3</span> <span class="m" style="font-size:13.5px;opacity:.85">000</span> <span class="m" style="font-size:13.5px;opacity:.85">000</span>,<span class="m" style="font-size:13.5px;opacity:.85">00</span></div>
<div class="t" style="left:1051.91px;top:898.40px;font-size:12px;color:#7a7a7a;transform:scaleX(0.8800);"><span class="m" style="font-size:13.5px;opacity:.85">3</span> <span class="m" style="font-size:13.5px;opacity:.85">500</span> <span class="m" style="font-size:13.5px;opacity:.85">000</span>,<span class="m" style="font-size:13.5px;opacity:.85">00</span></div>
<div class="t" style="left:1184.16px;top:898.40px;font-size:12px;color:#7a7a7a;transform:scaleX(0.8800);"><span class="m" style="font-size:13.5px;opacity:.85">4</span> <span class="m" style="font-size:13.5px;opacity:.85">000</span> <span class="m" style="font-size:13.5px;opacity:.85">000</span>,<span class="m" style="font-size:13.5px;opacity:.85">00</span></div>
<div class="t" style="left:1316.41px;top:898.40px;font-size:12px;color:#7a7a7a;transform:scaleX(0.8800);"><span class="m" style="font-size:13.5px;opacity:.85">4</span> <span class="m" style="font-size:13.5px;opacity:.85">500</span> <span class="m" style="font-size:13.5px;opacity:.85">000</span>,<span class="m" style="font-size:13.5px;opacity:.85">00</span></div>
<div class="t" style="left:21.28px;top:676.95px;font-size:13px;color:#6a6a6a;transform:scaleX(0.9213);">Группа товаров <span class="m" style="font-size:12.5px;opacity:.85">1207051</span></div>
<div class="t" style="left:21.28px;top:704.95px;font-size:13px;color:#6a6a6a;transform:scaleX(0.9213);">Группа товаров <span class="m" style="font-size:12.5px;opacity:.85">1207149</span></div>
<div class="t" style="left:21.28px;top:732.95px;font-size:13px;color:#6a6a6a;transform:scaleX(0.9213);">Группа товаров <span class="m" style="font-size:12.5px;opacity:.85">1207018</span></div>
<div class="t" style="left:21.28px;top:760.95px;font-size:13px;color:#6a6a6a;transform:scaleX(0.9213);">Группа товаров <span class="m" style="font-size:12.5px;opacity:.85">1208384</span></div>
<div class="t" style="left:21.28px;top:788.95px;font-size:13px;color:#6a6a6a;transform:scaleX(0.9213);">Группа товаров <span class="m" style="font-size:12.5px;opacity:.85">1207192</span></div>
<div class="t" style="left:21.28px;top:816.95px;font-size:13px;color:#6a6a6a;transform:scaleX(0.9213);">Группа товаров <span class="m" style="font-size:12.5px;opacity:.85">1207376</span></div>
<div class="t" style="left:21.28px;top:844.95px;font-size:13px;color:#6a6a6a;transform:scaleX(0.9213);">Группа товаров <span class="m" style="font-size:12.5px;opacity:.85">1206989</span></div>
<div class="t" style="left:1514.91px;top:638.35px;font-size:19px;color:#7f7f7f;font-weight:bold;transform:scaleX(0.8872);">Подгруппа товаров</div>
<div class="t" style="left:1664.48px;top:898.40px;font-size:12px;color:#7a7a7a;transform:scaleX(0.8800);"><span class="m" style="font-size:13.5px;opacity:.85">0</span>,<span class="m" style="font-size:13.5px;opacity:.85">00</span></div>
<div class="t" style="left:1740.39px;top:898.40px;font-size:12px;color:#7a7a7a;transform:scaleX(0.8800);"><span class="m" style="font-size:13.5px;opacity:.85">500</span> <span class="m" style="font-size:13.5px;opacity:.85">000</span>,<span class="m" style="font-size:13.5px;opacity:.85">00</span></div>
<div class="t" style="left:1830.56px;top:898.40px;font-size:12px;color:#7a7a7a;transform:scaleX(0.8800);"><span class="m" style="font-size:13.5px;opacity:.85">1</span> <span class="m" style="font-size:13.5px;opacity:.85">000</span> <span class="m" style="font-size:13.5px;opacity:.85">000</span>,<span class="m" style="font-size:13.5px;opacity:.85">00</span></div>
<div class="t" style="left:1925.76px;top:898.40px;font-size:12px;color:#7a7a7a;transform:scaleX(0.8800);"><span class="m" style="font-size:13.5px;opacity:.85">1</span> <span class="m" style="font-size:13.5px;opacity:.85">500</span> <span class="m" style="font-size:13.5px;opacity:.85">000</span>,<span class="m" style="font-size:13.5px;opacity:.85">00</span></div>
<div class="t" style="left:2020.96px;top:898.40px;font-size:12px;color:#7a7a7a;transform:scaleX(0.8800);"><span class="m" style="font-size:13.5px;opacity:.85">2</span> <span class="m" style="font-size:13.5px;opacity:.85">000</span> <span class="m" style="font-size:13.5px;opacity:.85">000</span>,<span class="m" style="font-size:13.5px;opacity:.85">00</span></div>
<div class="t" style="left:2116.16px;top:898.40px;font-size:12px;color:#7a7a7a;transform:scaleX(0.8800);"><span class="m" style="font-size:13.5px;opacity:.85">2</span> <span class="m" style="font-size:13.5px;opacity:.85">500</span> <span class="m" style="font-size:13.5px;opacity:.85">000</span>,<span class="m" style="font-size:13.5px;opacity:.85">00</span></div>
<div class="t" style="left:2211.36px;top:898.40px;font-size:12px;color:#7a7a7a;transform:scaleX(0.8800);"><span class="m" style="font-size:13.5px;opacity:.85">3</span> <span class="m" style="font-size:13.5px;opacity:.85">000</span> <span class="m" style="font-size:13.5px;opacity:.85">000</span>,<span class="m" style="font-size:13.5px;opacity:.85">00</span></div>
<div class="t" style="left:2306.56px;top:898.40px;font-size:12px;color:#7a7a7a;transform:scaleX(0.8800);"><span class="m" style="font-size:13.5px;opacity:.85">3</span> <span class="m" style="font-size:13.5px;opacity:.85">500</span> <span class="m" style="font-size:13.5px;opacity:.85">000</span>,<span class="m" style="font-size:13.5px;opacity:.85">00</span></div>
<div class="t" style="left:2401.76px;top:898.40px;font-size:12px;color:#7a7a7a;transform:scaleX(0.8800);"><span class="m" style="font-size:13.5px;opacity:.85">4</span> <span class="m" style="font-size:13.5px;opacity:.85">000</span> <span class="m" style="font-size:13.5px;opacity:.85">000</span>,<span class="m" style="font-size:13.5px;opacity:.85">00</span></div>
<div class="t" style="left:2496.96px;top:898.40px;font-size:12px;color:#7a7a7a;transform:scaleX(0.8800);"><span class="m" style="font-size:13.5px;opacity:.85">4</span> <span class="m" style="font-size:13.5px;opacity:.85">500</span> <span class="m" style="font-size:13.5px;opacity:.85">000</span>,<span class="m" style="font-size:13.5px;opacity:.85">00</span></div>
<div class="t" style="left:2592.16px;top:898.40px;font-size:12px;color:#7a7a7a;transform:scaleX(0.8800);"><span class="m" style="font-size:13.5px;opacity:.85">5</span> <span class="m" style="font-size:13.5px;opacity:.85">000</span> <span class="m" style="font-size:13.5px;opacity:.85">000</span>,<span class="m" style="font-size:13.5px;opacity:.85">00</span></div>
<div class="t" style="left:1578.50px;top:676.95px;font-size:13px;color:#6a6a6a;transform:scaleX(0.9025);">Группа товаров <span class="m" style="font-size:12.5px;opacity:.85">5</span></div>
<div class="t" style="left:1535.28px;top:704.95px;font-size:13px;color:#6a6a6a;transform:scaleX(0.9200);">Группа товаров <span class="m" style="font-size:12.5px;opacity:.85">5208805</span></div>
<div class="t" style="left:1535.28px;top:732.95px;font-size:13px;color:#6a6a6a;transform:scaleX(0.9200);">Группа товаров <span class="m" style="font-size:12.5px;opacity:.85">5207447</span></div>
<div class="t" style="left:1535.28px;top:760.95px;font-size:13px;color:#6a6a6a;transform:scaleX(0.9200);">Группа товаров <span class="m" style="font-size:12.5px;opacity:.85">5212206</span></div>
<div class="t" style="left:1535.28px;top:788.95px;font-size:13px;color:#6a6a6a;transform:scaleX(0.9200);">Группа товаров <span class="m" style="font-size:12.5px;opacity:.85">5733654</span></div>
<div class="t" style="left:1535.28px;top:816.95px;font-size:13px;color:#6a6a6a;transform:scaleX(0.9200);">Группа товаров <span class="m" style="font-size:12.5px;opacity:.85">5471849</span></div>
<div class="t" style="left:1527.78px;top:844.95px;font-size:13px;color:#6a6a6a;transform:scaleX(0.9238);">Группа товаров <span class="m" style="font-size:12.5px;opacity:.85">51260673</span></div>
<div class="t" style="left:2635.30px;top:387.05px;font-size:15px;color:#404040;">Группа товаров 3</div>
<div class="t" style="left:2655.60px;top:417.15px;font-size:13px;color:#6a6a6a;">Группа товаров</div>
<div class="t" style="left:2656.60px;top:432.55px;font-size:13px;color:#6a6a6a;"><span class="m" style="font-size:13px;opacity:.85">3206971</span></div>
<div class="t" style="left:2655.60px;top:452.55px;font-size:13px;color:#6a6a6a;">Группа товаров</div>
<div class="t" style="left:2656.60px;top:467.95px;font-size:13px;color:#6a6a6a;"><span class="m" style="font-size:13px;opacity:.85">3206981</span></div>
<div class="t" style="left:2655.60px;top:487.85px;font-size:13px;color:#6a6a6a;">Группа товаров</div>
<div class="t" style="left:2656.60px;top:503.25px;font-size:13px;color:#6a6a6a;"><span class="m" style="font-size:13px;opacity:.85">3206991</span></div>
<div class="t" style="left:2655.60px;top:523.05px;font-size:13px;color:#6a6a6a;">Группа товаров</div>
<div class="t" style="left:1361.00px;top:679.25px;font-size:15px;color:#404040;">Группа товаров 1</div>
<div class="t" style="left:1381.30px;top:709.55px;font-size:13px;color:#6a6a6a;">Группа товаров</div>
<div class="t" style="left:1382.30px;top:724.95px;font-size:13px;color:#6a6a6a;"><span class="m" style="font-size:13px;opacity:.85">1206969</span></div>
<div class="t" style="left:1381.30px;top:744.55px;font-size:13px;color:#6a6a6a;">Группа товаров</div>
<div class="t" style="left:1382.30px;top:759.95px;font-size:13px;color:#6a6a6a;"><span class="m" style="font-size:13px;opacity:.85">1206979</span></div>
<div class="t" style="left:1381.30px;top:779.55px;font-size:13px;color:#6a6a6a;">Группа товаров</div>
<div class="t" style="left:1382.30px;top:794.95px;font-size:13px;color:#6a6a6a;"><span class="m" style="font-size:13px;opacity:.85">1206989</span></div>
<div class="t" style="left:1381.30px;top:814.55px;font-size:13px;color:#6a6a6a;">Группа товаров</div>
<div class="t" style="left:2635.40px;top:679.25px;font-size:15px;color:#404040;">Группа товаров 5</div>
<div class="t" style="left:2655.70px;top:716.95px;font-size:13px;color:#6a6a6a;">Группа товаров 5</div>
<div class="t" style="left:2655.70px;top:744.55px;font-size:13px;color:#6a6a6a;">Группа товаров</div>
<div class="t" style="left:2656.70px;top:759.95px;font-size:13px;color:#6a6a6a;"><span class="m" style="font-size:13px;opacity:.85">513455</span></div>
<div class="t" style="left:2655.70px;top:779.55px;font-size:13px;color:#6a6a6a;">Группа товаров</div>
<div class="t" style="left:2656.70px;top:794.95px;font-size:13px;color:#6a6a6a;"><span class="m" style="font-size:13px;opacity:.85">5206993</span></div>
<div class="t" style="left:2655.70px;top:814.55px;font-size:13px;color:#6a6a6a;">Группа товаров</div>
<div class="t" style="left:10.27px;top:932.20px;font-size:18px;color:#7f7f7f;font-weight:bold;transform:scaleX(0.9289);">Перечень клиентов для рассылки</div>
<div class="t" style="left:8.30px;top:995.20px;font-size:18px;color:#595959;">ФИО</div>
<div class="t" style="left:169.00px;top:995.20px;font-size:18px;color:#595959;">E-mail</div>
<div class="t" style="left:320.00px;top:995.20px;font-size:18px;color:#595959;">Номер дисконтной карты</div>
<div class="t" style="left:585.00px;top:972.90px;font-size:18px;color:#595959;">Участник бонусной</div>
<div class="t" style="left:584.00px;top:995.00px;font-size:18px;color:#595959;">программы</div>
<div class="t" style="left:897.00px;top:995.71px;font-size:17.4px;color:#595959;">Телефон клиента</div>
<div class="t" style="left:1159.84px;top:995.54px;font-size:17.6px;color:#595959;">Выручка, руб</div>
<div class="t" style="left:8.30px;top:1033.15px;font-size:17px;color:#4f4f4f;font-weight:bold;">Итоги</div>
<div class="t" style="left:1149.00px;top:1033.25px;font-size:17px;color:#4f4f4f;font-weight:bold;transform:scaleX(1.0992);">21 856 172,23</div>
<div class="t" style="left:8.30px;top:1067.50px;font-size:18px;color:#595959;">Клиент<span class="m" style="font-size:18px;opacity:.85">14690</span></div>
<div class="t" style="left:168.20px;top:1067.50px;font-size:18px;color:#595959;">-</div>
<div class="t" style="left:490.19px;top:1067.50px;font-size:18px;color:#595959;"><span class="m" style="font-size:18px;opacity:.85">5252478</span></div>
<div class="t" style="left:585.00px;top:1067.50px;font-size:18px;color:#595959;">-</div>
<div class="t" style="left:897.00px;top:1068.18px;font-size:17.2px;color:#595959;">Телефон клиента<span class="m" style="font-size:18px;opacity:.85">14691</span></div>
<div class="t" style="left:1232.20px;top:1067.50px;font-size:18px;color:#595959;"><span class="m" style="font-size:18px;opacity:.85">0</span>,<span class="m" style="font-size:18px;opacity:.85">00</span></div>
<div class="t" style="left:8.30px;top:1100.10px;font-size:18px;color:#595959;">Клиент<span class="m" style="font-size:18px;opacity:.85">48605</span></div>
<div class="t" style="left:168.20px;top:1100.10px;font-size:18px;color:#595959;">-</div>
<div class="t" style="left:490.19px;top:1100.10px;font-size:18px;color:#595959;"><span class="m" style="font-size:18px;opacity:.85">5278090</span></div>
<div class="t" style="left:585.00px;top:1100.10px;font-size:18px;color:#595959;">-</div>
<div class="t" style="left:897.00px;top:1100.78px;font-size:17.2px;color:#595959;">Телефон клиента<span class="m" style="font-size:18px;opacity:.85">48606</span></div>
<div class="t" style="left:1210.59px;top:1100.10px;font-size:18px;color:#595959;"><span class="m" style="font-size:18px;opacity:.85">423</span>,<span class="m" style="font-size:18px;opacity:.85">67</span></div>
<div class="t" style="left:8.30px;top:1132.70px;font-size:18px;color:#595959;">Клиент<span class="m" style="font-size:18px;opacity:.85">91698</span></div>
<div class="t" style="left:168.20px;top:1132.70px;font-size:18px;color:#595959;">-</div>
<div class="t" style="left:490.19px;top:1132.70px;font-size:18px;color:#595959;"><span class="m" style="font-size:18px;opacity:.85">5256244</span></div>
<div class="t" style="left:585.00px;top:1132.70px;font-size:18px;color:#595959;">-</div>
<div class="t" style="left:897.00px;top:1133.38px;font-size:17.2px;color:#595959;">Телефон клиента<span class="m" style="font-size:18px;opacity:.85">75565</span></div>
<div class="t" style="left:1221.39px;top:1132.70px;font-size:18px;color:#595959;"><span class="m" style="font-size:18px;opacity:.85">86</span>,<span class="m" style="font-size:18px;opacity:.85">91</span></div>
<div class="t" style="left:8.30px;top:1164.70px;font-size:18px;color:#595959;">Клиент<span class="m" style="font-size:18px;opacity:.85">138817</span></div>
<div class="t" style="left:168.20px;top:1164.70px;font-size:18px;color:#595959;">-</div>
<div class="t" style="left:490.19px;top:1164.70px;font-size:18px;color:#595959;"><span class="m" style="font-size:18px;opacity:.85">5213297</span></div>
<div class="t" style="left:585.00px;top:1164.70px;font-size:18px;color:#595959;">-</div>
<div class="t" style="left:897.00px;top:1165.38px;font-size:17.2px;color:#595959;">Телефон клиента<span class="m" style="font-size:18px;opacity:.85">43301</span></div>
<div class="t" style="left:1232.20px;top:1164.70px;font-size:18px;color:#595959;"><span class="m" style="font-size:18px;opacity:.85">0</span>,<span class="m" style="font-size:18px;opacity:.85">00</span></div>
<div class="t" style="left:8.30px;top:1196.70px;font-size:18px;color:#595959;">Клиент<span class="m" style="font-size:18px;opacity:.85">206275</span></div>
<div class="t" style="left:168.20px;top:1196.70px;font-size:18px;color:#595959;">-</div>
<div class="t" style="left:500.99px;top:1196.70px;font-size:18px;color:#595959;"><span class="m" style="font-size:18px;opacity:.85">921914</span></div>
<div class="t" style="left:585.00px;top:1196.70px;font-size:18px;color:#595959;">-</div>
<div class="t" style="left:897.00px;top:1197.38px;font-size:17.2px;color:#595959;">Телефон клиента<span class="m" style="font-size:18px;opacity:.85">94705</span></div>
<div class="t" style="left:1194.79px;top:1196.70px;font-size:18px;color:#595959;"><span class="m" style="font-size:18px;opacity:.85">6</span> <span class="m" style="font-size:18px;opacity:.85">843</span>,<span class="m" style="font-size:18px;opacity:.85">94</span></div>
<div class="t" style="left:8.30px;top:1229.20px;font-size:18px;color:#595959;">Клиент<span class="m" style="font-size:18px;opacity:.85">1412996</span></div>
<div class="t" style="left:168.20px;top:1229.20px;font-size:18px;color:#595959;">-</div>
<div class="t" style="left:490.19px;top:1229.20px;font-size:18px;color:#595959;"><span class="m" style="font-size:18px;opacity:.85">5259810</span></div>
<div class="t" style="left:585.00px;top:1229.20px;font-size:18px;color:#595959;">-</div>
<div class="t" style="left:897.00px;top:1229.88px;font-size:17.2px;color:#595959;">Телефон клиента<span class="m" style="font-size:18px;opacity:.85">93125</span></div>
<div class="t" style="left:1183.99px;top:1229.20px;font-size:18px;color:#595959;"><span class="m" style="font-size:18px;opacity:.85">28</span> <span class="m" style="font-size:18px;opacity:.85">788</span>,<span class="m" style="font-size:18px;opacity:.85">01</span></div>
<div class="t" style="left:8.30px;top:1261.70px;font-size:18px;color:#595959;">Клиент<span class="m" style="font-size:18px;opacity:.85">1412996</span></div>
<div class="t" style="left:168.20px;top:1261.70px;font-size:18px;color:#595959;">-</div>
<div class="t" style="left:490.19px;top:1261.70px;font-size:18px;color:#595959;"><span class="m" style="font-size:18px;opacity:.85">5246822</span></div>
<div class="t" style="left:585.00px;top:1261.70px;font-size:18px;color:#595959;">-</div>
<div class="t" style="left:897.00px;top:1262.38px;font-size:17.2px;color:#595959;">Телефон</div>
<div class="t" style="left:896.00px;top:1283.98px;font-size:17.2px;color:#595959;">клиента<span class="m" style="font-size:18px;opacity:.85">1590709</span></div>
<div class="t" style="left:1183.99px;top:1261.70px;font-size:18px;color:#595959;"><span class="m" style="font-size:18px;opacity:.85">23</span> <span class="m" style="font-size:18px;opacity:.85">095</span>,<span class="m" style="font-size:18px;opacity:.85">59</span></div>
<div class="t" style="left:8.30px;top:1315.40px;font-size:18px;color:#595959;">Клиент<span class="m" style="font-size:18px;opacity:.85">1412996</span></div>
<div class="t" style="left:168.20px;top:1315.40px;font-size:18px;color:#595959;">-</div>
<div class="t" style="left:490.19px;top:1315.40px;font-size:18px;color:#595959;"><span class="m" style="font-size:18px;opacity:.85">5209674</span></div>
<div class="t" style="left:585.00px;top:1315.40px;font-size:18px;color:#595959;">-</div>
<div class="t" style="left:897.00px;top:1316.08px;font-size:17.2px;color:#595959;">Телефон клиента<span class="m" style="font-size:18px;opacity:.85">141718</span></div>
<div class="t" style="left:1183.99px;top:1315.40px;font-size:18px;color:#595959;"><span class="m" style="font-size:18px;opacity:.85">22</span> <span class="m" style="font-size:18px;opacity:.85">172</span>,<span class="m" style="font-size:18px;opacity:.85">20</span></div>
<div style="position:absolute;left:1916px;top:168px;width:223px;height:19px;background:linear-gradient(rgba(0,0,0,0),rgba(0,0,0,0.07))"></div>
<div style="position:absolute;left:2156px;top:168px;width:223px;height:19px;background:linear-gradient(rgba(0,0,0,0),rgba(0,0,0,0.07))"></div>
<div style="position:absolute;left:0;top:1300px;width:2778px;height:38px;background:linear-gradient(rgba(0,0,0,0),rgba(0,0,0,0.035))"></div>
</body></html>
